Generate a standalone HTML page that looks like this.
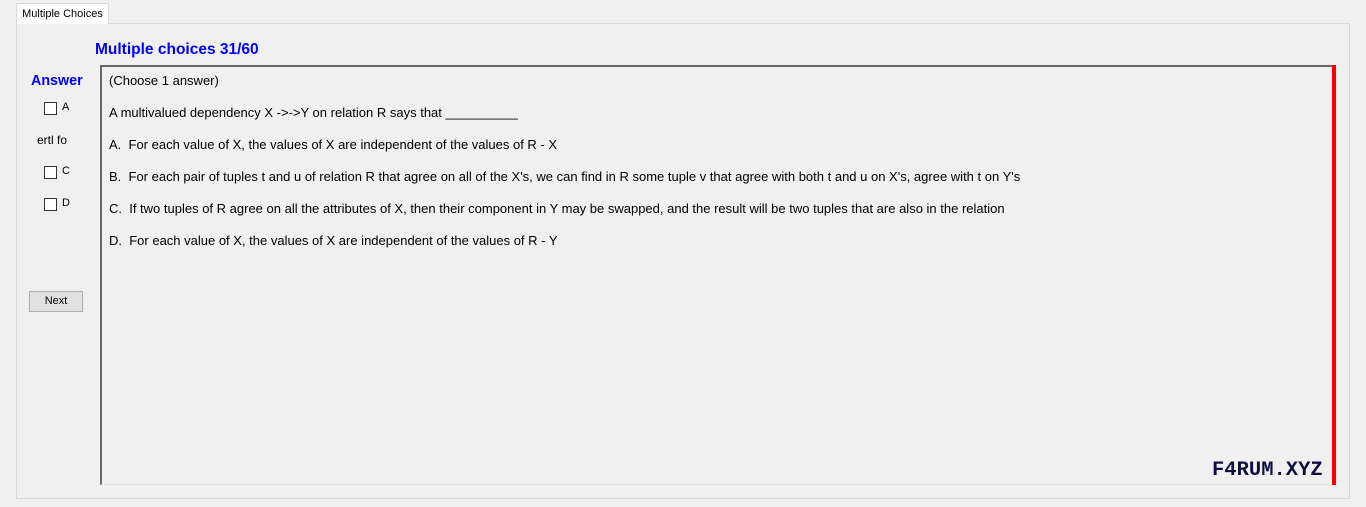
<!DOCTYPE html>
<html><head><style>
body{margin:0;width:1366px;height:507px;background:#f0f0f0;font-family:"Liberation Sans",sans-serif;position:relative;overflow:hidden;color:#000}
.abs{position:absolute}
.tab{left:16px;top:3px;width:91px;height:20px;border:1px solid #d9d9d9;border-bottom:none;background:#fff;font-size:11px;line-height:20px;text-align:center;z-index:2}
.panel{left:16px;top:23px;width:1332px;height:474px;border:1px solid #d9d9d9;background:#f0f0f0}
.title{left:95px;top:41px;font-size:15.5px;font-weight:bold;color:#0000ff}
.ans{left:31px;top:73px;font-size:14.3px;font-weight:bold;color:#0000ff}
.cb{width:11px;height:11px;border:1px solid #333;background:#fff}
.lbl{font-size:11px}
.box{left:100px;top:65px;width:1232px;height:417px;border-left:2px solid #696969;border-top:2px solid #696969;border-bottom:1px solid #e3e3e3;background:#f0f0f0}
.red{left:1332px;top:65px;width:4px;height:420px;background:#ff0000}
.t{position:absolute;left:7px;font-size:13px;white-space:nowrap;letter-spacing:0}
.btn{left:29px;top:291px;width:52px;height:19px;border:1px solid #adadad;background:#e1e1e1;font-size:11px;line-height:19px;text-align:center}
.wm{left:1212px;top:459px;font-family:"Liberation Mono",monospace;font-weight:bold;font-size:20.5px;color:#101040}
</style></head><body>
<div class="abs tab">Multiple Choices</div>
<div class="abs panel"></div>
<div class="abs title">Multiple choices 31/60</div>
<div class="abs ans">Answer</div>
<div class="abs cb" style="left:44px;top:102px"></div><div class="abs lbl" style="left:62px;top:101px">A</div>
<div class="abs lbl" style="left:37px;top:133px;font-size:12px">ertl fo</div>
<div class="abs cb" style="left:44px;top:166px"></div><div class="abs lbl" style="left:62px;top:165px">C</div>
<div class="abs cb" style="left:44px;top:198px"></div><div class="abs lbl" style="left:62px;top:197px">D</div>
<div class="abs btn">Next</div>
<div class="abs box">
<div class="t" style="top:6px">(Choose 1 answer)</div>
<div class="t" style="top:38px">A multivalued dependency X -&gt;-&gt;Y on relation R says that __________</div>
<div class="t" style="top:70px">A.&nbsp; For each value of X, the values of X are independent of the values of R - X</div>
<div class="t" style="top:102px">B.&nbsp; For each pair of tuples t and u of relation R that agree on all of the X's, we can find in R some tuple v that agree with both t and u on X's, agree with t on Y's</div>
<div class="t" style="top:134px">C.&nbsp; If two tuples of R agree on all the attributes of X, then their component in Y may be swapped, and the result will be two tuples that are also in the relation</div>
<div class="t" style="top:166px">D.&nbsp; For each value of X, the values of X are independent of the values of R - Y</div>
</div>
<div class="abs red"></div>
<div class="abs wm">F4RUM.XYZ</div>
</body></html>
